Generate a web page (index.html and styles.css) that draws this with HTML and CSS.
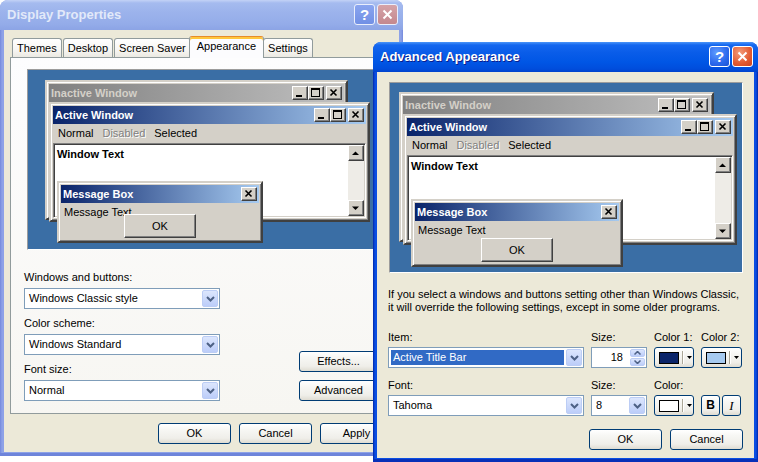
FILE: index.html
```html
<!DOCTYPE html>
<html lang="en">
<head>
<meta charset="utf-8">
<title>Display Properties</title>
<link rel="stylesheet" href="styles.css">
</head>
<body>
<div class="desktop">

  <div class="xpwin dp">
    <div class="xptitle">
      <span class="xptitle-text">Display Properties</span>
      <span class="xpbtn help">?</span>
      <span class="xpbtn close"><svg width="11" height="11" viewBox="0 0 11 11"><path d="M1.5 1.5l8 8M9.5 1.5l-8 8" stroke="#fff" stroke-width="2"/></svg></span>
    </div>
    <div class="xpbody dp-body">
      <div class="tabs">
        <div class="tab">Themes</div>
        <div class="tab">Desktop</div>
        <div class="tab">Screen Saver</div>
        <div class="tab sel">Appearance</div>
        <div class="tab">Settings</div>
      </div>
      <div class="tabpanel">
        <div class="preview dp-preview">
          <div class="cwin inact">
            <div class="ctitle"><span class="t">Inactive Window</span>
              <span class="cb"><svg width="14" height="12" viewBox="0 0 14 12"><rect x="3" y="8" width="6" height="2"/></svg></span>
              <span class="cb"><svg width="14" height="12" viewBox="0 0 14 12"><path fill-rule="evenodd" d="M2 1h9v9H2z M3 3v6h7V3z"/></svg></span>
              <span class="cb gap"><svg width="14" height="12" viewBox="0 0 14 12"><path d="M3.5 2.5l6 6M9.5 2.5l-6 6" stroke="#000" stroke-width="1.6"/></svg></span>
            </div>
          </div>
          <div class="cwin act">
            <div class="ctitle"><span class="t">Active Window</span>
              <span class="cb"><svg width="14" height="12" viewBox="0 0 14 12"><rect x="3" y="8" width="6" height="2"/></svg></span>
              <span class="cb"><svg width="14" height="12" viewBox="0 0 14 12"><path fill-rule="evenodd" d="M2 1h9v9H2z M3 3v6h7V3z"/></svg></span>
              <span class="cb gap"><svg width="14" height="12" viewBox="0 0 14 12"><path d="M3.5 2.5l6 6M9.5 2.5l-6 6" stroke="#000" stroke-width="1.6"/></svg></span>
            </div>
            <div class="cmenu"><span>Normal</span><span class="dis">Disabled</span><span>Selected</span></div>
            <div class="ctext">
              <div class="wtext">Window Text</div>
              <div class="cscroll">
                <span class="cb sq"><svg width="14" height="14" viewBox="0 0 14 14"><path d="M3 9h7L6.5 5.5z"/></svg></span>
                <span class="track"></span>
                <span class="cb sq"><svg width="14" height="14" viewBox="0 0 14 14"><path d="M3 5.5h7L6.5 9z"/></svg></span>
              </div>
            </div>
          </div>
          <div class="cwin msg">
            <div class="ctitle"><span class="t">Message Box</span>
              <span class="cb"><svg width="14" height="12" viewBox="0 0 14 12"><path d="M3.5 2.5l6 6M9.5 2.5l-6 6" stroke="#000" stroke-width="1.6"/></svg></span>
            </div>
            <div class="mtext">Message Text</div>
            <div class="cpush">OK</div>
          </div>
        </div>

        <div class="dp-controls">
          <div class="fields">
            <div class="field">
              <div class="lbl">Windows and buttons:</div>
              <div class="combo"><span class="val">Windows Classic style</span><span class="drop"><svg width="9" height="6" viewBox="0 0 9 6"><path d="M1 1l3.5 3.5L8 1" stroke="#4d6185" stroke-width="2" fill="none"/></svg></span></div>
            </div>
            <div class="field">
              <div class="lbl">Color scheme:</div>
              <div class="combo"><span class="val">Windows Standard</span><span class="drop"><svg width="9" height="6" viewBox="0 0 9 6"><path d="M1 1l3.5 3.5L8 1" stroke="#4d6185" stroke-width="2" fill="none"/></svg></span></div>
            </div>
            <div class="field">
              <div class="lbl">Font size:</div>
              <div class="combo"><span class="val">Normal</span><span class="drop"><svg width="9" height="6" viewBox="0 0 9 6"><path d="M1 1l3.5 3.5L8 1" stroke="#4d6185" stroke-width="2" fill="none"/></svg></span></div>
            </div>
          </div>
          <div class="side-btns">
            <div class="xbtn wide">Effects...</div>
            <div class="xbtn wide">Advanced</div>
          </div>
        </div>
      </div>
      <div class="dlg-btns">
        <div class="xbtn">OK</div>
        <div class="xbtn">Cancel</div>
        <div class="xbtn">Apply</div>
      </div>
    </div>
  </div>

  <div class="xpwin aa">
    <div class="xptitle">
      <span class="xptitle-text">Advanced Appearance</span>
      <span class="xpbtn help">?</span>
      <span class="xpbtn close"><svg width="11" height="11" viewBox="0 0 11 11"><path d="M1.5 1.5l8 8M9.5 1.5l-8 8" stroke="#fff" stroke-width="2"/></svg></span>
    </div>
    <div class="xpbody aa-body">
      <div class="preview aa-preview">
        <div class="cwin inact">
          <div class="ctitle"><span class="t">Inactive Window</span>
            <span class="cb"><svg width="14" height="12" viewBox="0 0 14 12"><rect x="3" y="8" width="6" height="2"/></svg></span>
            <span class="cb"><svg width="14" height="12" viewBox="0 0 14 12"><path fill-rule="evenodd" d="M2 1h9v9H2z M3 3v6h7V3z"/></svg></span>
            <span class="cb gap"><svg width="14" height="12" viewBox="0 0 14 12"><path d="M3.5 2.5l6 6M9.5 2.5l-6 6" stroke="#000" stroke-width="1.6"/></svg></span>
          </div>
        </div>
        <div class="cwin act">
          <div class="ctitle"><span class="t">Active Window</span>
            <span class="cb"><svg width="14" height="12" viewBox="0 0 14 12"><rect x="3" y="8" width="6" height="2"/></svg></span>
            <span class="cb"><svg width="14" height="12" viewBox="0 0 14 12"><path fill-rule="evenodd" d="M2 1h9v9H2z M3 3v6h7V3z"/></svg></span>
            <span class="cb gap"><svg width="14" height="12" viewBox="0 0 14 12"><path d="M3.5 2.5l6 6M9.5 2.5l-6 6" stroke="#000" stroke-width="1.6"/></svg></span>
          </div>
          <div class="cmenu"><span>Normal</span><span class="dis">Disabled</span><span>Selected</span></div>
          <div class="ctext">
            <div class="wtext">Window Text</div>
            <div class="cscroll">
              <span class="cb sq"><svg width="14" height="14" viewBox="0 0 14 14"><path d="M3 9h7L6.5 5.5z"/></svg></span>
              <span class="track"></span>
              <span class="cb sq"><svg width="14" height="14" viewBox="0 0 14 14"><path d="M3 5.5h7L6.5 9z"/></svg></span>
            </div>
          </div>
        </div>
        <div class="cwin msg">
          <div class="ctitle"><span class="t">Message Box</span>
            <span class="cb"><svg width="14" height="12" viewBox="0 0 14 12"><path d="M3.5 2.5l6 6M9.5 2.5l-6 6" stroke="#000" stroke-width="1.6"/></svg></span>
          </div>
          <div class="mtext">Message Text</div>
          <div class="cpush">OK</div>
        </div>
      </div>

      <p class="note">If you select a windows and buttons setting other than Windows Classic,<br>it will override the following settings, except in some older programs.</p>

      <div class="aa-grid">
        <div class="lbl">Item:</div>
        <div class="lbl">Size:</div>
        <div class="lbl">Color 1:</div>
        <div class="lbl">Color 2:</div>

        <div class="combo"><span class="val hl">Active Title Bar</span><span class="drop"><svg width="9" height="6" viewBox="0 0 9 6"><path d="M1 1l3.5 3.5L8 1" stroke="#4d6185" stroke-width="2" fill="none"/></svg></span></div>
        <div class="spin"><span class="val">18</span><span class="arrows"><span><svg width="7" height="4" viewBox="0 0 7 4"><path d="M0.5 3.5l3-3 3 3" stroke="#4d6185" stroke-width="1.5" fill="none"/></svg></span><span><svg width="7" height="4" viewBox="0 0 7 4"><path d="M0.5 0.5l3 3 3-3" stroke="#4d6185" stroke-width="1.5" fill="none"/></svg></span></span></div>
        <div class="xbtn colorbtn"><span class="swatch navy"></span><span class="sep"></span><svg width="5" height="3" viewBox="0 0 5 3"><path d="M0 0h5L2.5 3z"/></svg></div>
        <div class="xbtn colorbtn"><span class="swatch light"></span><span class="sep"></span><svg width="5" height="3" viewBox="0 0 5 3"><path d="M0 0h5L2.5 3z"/></svg></div>

        <div class="lbl low">Font:</div>
        <div class="lbl low">Size:</div>
        <div class="lbl low">Color:</div>
        <div class="lbl low"></div>

        <div class="combo"><span class="val">Tahoma</span><span class="drop"><svg width="9" height="6" viewBox="0 0 9 6"><path d="M1 1l3.5 3.5L8 1" stroke="#4d6185" stroke-width="2" fill="none"/></svg></span></div>
        <div class="combo"><span class="val">8</span><span class="drop"><svg width="9" height="6" viewBox="0 0 9 6"><path d="M1 1l3.5 3.5L8 1" stroke="#4d6185" stroke-width="2" fill="none"/></svg></span></div>
        <div class="xbtn colorbtn"><span class="swatch white"></span><span class="sep"></span><svg width="5" height="3" viewBox="0 0 5 3"><path d="M0 0h5L2.5 3z"/></svg></div>
        <div class="bi"><div class="xbtn bold">B</div><div class="xbtn ital">I</div></div>
      </div>

      <div class="aa-btns">
        <div class="xbtn">OK</div>
        <div class="xbtn">Cancel</div>
      </div>
    </div>
  </div>

</div>
</body>
</html>
```

FILE: styles.css
```css
* { box-sizing: border-box; margin: 0; padding: 0; }

body {
  width: 758px;
  height: 462px;
  overflow: hidden;
  background: #fff;
  font-family: "Liberation Sans", Arial, sans-serif;
  font-size: 11px;
  line-height: 13px;
  color: #000;
}

.desktop { position: relative; width: 758px; height: 462px; }

/* ---------- XP window frame ---------- */
.xpwin {
  position: absolute;
  display: flex;
  flex-direction: column;
  border-radius: 8px 8px 0 0;
  overflow: hidden;
}
.dp {
  left: 0; top: 0; width: 403px; height: 456px;
  background: linear-gradient(to right, #7489dc, #8ea2e7 2px, #8ea2e7 calc(100% - 2px), #7489dc);
  box-shadow: inset 0 -3px #6e84da;
}
.aa {
  left: 373px; top: 42px; width: 385px; height: 420px;
  background: linear-gradient(to right, #0026a8, #0a4ee2 2px, #0a4ee2 calc(100% - 2px), #0026a8);
  box-shadow: inset 0 -3px #0830b8;
}

.xptitle {
  flex: none;
  height: 30px;
  display: flex;
  align-items: center;
  padding: 0 5px 1px 7px;
}
.xptitle-text {
  flex: 1;
  font-weight: bold;
  font-size: 13px;
  line-height: 16px;
  white-space: nowrap;
}
.dp .xptitle { background: linear-gradient(#c3d2f6, #a5bbef 3px, #9cb3ec 12px, #94ace9 24px, #8ca4e5); }
.dp .xptitle-text { color: #e2e9f9; }
.aa .xptitle { background: linear-gradient(#4b95f8, #1467ef 3px, #0a5de9 10px, #0056e5 20px, #004ddc 27px, #0042cc); }
.aa .xptitle-text { color: #fff; text-shadow: 1px 1px #0b1d8c; }

.xpbtn {
  flex: none;
  width: 21px;
  height: 21px;
  margin-left: 2px;
  border: 1px solid #fff;
  border-radius: 3px;
  display: flex;
  align-items: center;
  justify-content: center;
  color: #fff;
  font-weight: bold;
  font-size: 15px;
  line-height: 15px;
}
.aa .help { background: radial-gradient(circle at 35% 30%, #5f9cff, #2b68ec 60%, #1c52d4); }
.aa .close { background: radial-gradient(circle at 35% 30%, #f39b79, #e25a31 60%, #c94321); }
.dp .xpbtn { border-color: #e9eefc; }
.dp .help { background: linear-gradient(#8aa5ef, #7190e5); }
.dp .close { background: linear-gradient(#d5a3a8, #c4888e); }

.xpbody {
  flex: 1;
  min-height: 0;
  background: #ece9d8;
  margin: 0 4px 4px;
  display: flex;
  flex-direction: column;
}
.dp-body { padding-top: 6px; }
.aa-body { padding: 10px 11px 0 12px; }

/* ---------- tabs ---------- */
.tabs {
  display: flex;
  align-items: flex-end;
  height: 21px;
  margin-left: 8px;
  position: relative;
  z-index: 1;
}
.tab {
  height: 19px;
  padding: 1px 4px 0;
  border: 1px solid #919b9c;
  border-bottom: none;
  border-radius: 3px 3px 0 0;
  background: linear-gradient(#fff, #f7f6f3 60%, #ebe9e2);
  display: flex;
  align-items: center;
  white-space: nowrap;
}
.tab + .tab { margin-left: 1px; }
.tab.sel {
  height: 22px;
  margin: 0 -2px -1px;
  padding: 0 7px 2px;
  background: #fcfcfe;
  border-top: 1px solid #e68b2c;
  box-shadow: inset 0 2px #ffc73c;
  position: relative;
}

.tabpanel {
  margin: 0 6px;
  border: 1px solid #919b9c;
  background: linear-gradient(#fdfdfe, #f7f6f2);
  padding: 11px 14px 12px 13px;
}

/* ---------- classic preview ---------- */
.preview {
  position: relative;
  background: #3a6ea5;
  border: 1px solid;
  border-color: #9c9c9c #fff #fff #9c9c9c;
  overflow: hidden;
}
.dp-preview { width: 349px; height: 181px; margin-left: 3px; }
.aa-preview { width: 354px; height: 191px; flex: none; }

.cwin {
  position: absolute;
  background: #d4d0c8;
  border: 2px solid;
  border-color: #d4d0c8 #404040 #404040 #d4d0c8;
  box-shadow: inset 1px 1px #fff, inset -1px -1px #808080;
  padding: 2px;
  display: flex;
  flex-direction: column;
}
.dp-preview .inact { left: 17px; top: 10px; width: 303px; height: 140px; }
.dp-preview .act { left: 21px; top: 32px; width: 321px; height: 120px; }
.dp-preview .msg { left: 29px; top: 111px; width: 206px; height: 62px; }
.dp-preview .msg .cpush { margin-top: -5px; }
.aa-preview .inact { left: 9px; top: 9px; width: 315px; height: 150px; }
.aa-preview .act { left: 13px; top: 31px; width: 334px; height: 131px; }
.aa-preview .msg { left: 21px; top: 116px; width: 212px; height: 68px; }
.aa-preview .msg .cpush { margin-top: 1px; }

.ctitle {
  flex: none;
  height: 18px;
  display: flex;
  align-items: center;
  padding: 0 2px 0 2px;
  font-weight: bold;
  color: #fff;
  white-space: nowrap;
  background: linear-gradient(to right, #0a246a, #a6caf0);
}
.inact .ctitle { background: linear-gradient(to right, #808080, #c0c0c0); color: #d4d0c8; }
.ctitle .t { flex: 1; }

.cb {
  flex: none;
  width: 16px;
  height: 14px;
  background: #d4d0c8;
  border: 1px solid;
  border-color: #fff #404040 #404040 #fff;
  box-shadow: inset -1px -1px #808080;
  display: flex;
}
.cb.gap { margin-left: 2px; }
.cb.sq { height: 16px; }

.cmenu {
  flex: none;
  height: 19px;
  display: flex;
  align-items: center;
  gap: 9px;
  padding-left: 5px;
}
.dis { color: #808080; text-shadow: 1px 1px #fff; }

.ctext {
  flex: 1;
  display: flex;
  background: #fff;
  border: 1px solid;
  border-color: #808080 #fff #fff #808080;
  box-shadow: inset 1px 1px #404040, inset -1px -1px #d4d0c8;
  padding: 1px;
}
.wtext { flex: 1; font-weight: bold; padding: 3px 2px; }
.cscroll { flex: none; width: 16px; display: flex; flex-direction: column; }
.track { flex: 1; background: #eeece7; }

.mtext { padding: 3px 3px 0; white-space: nowrap; }
.cpush {
  align-self: center;
  width: 72px;
  height: 24px;
  background: #d4d0c8;
  border: 1px solid;
  border-color: #fff #404040 #404040 #fff;
  box-shadow: inset -1px -1px #808080;
  display: flex;
  align-items: center;
  justify-content: center;
}

/* ---------- XP controls ---------- */
.dp-controls { display: flex; align-items: flex-end; margin-top: 21px; }
.fields { width: 196px; flex: none; }
.field + .field { margin-top: 8px; }
.lbl { height: 13px; margin-bottom: 4px; white-space: nowrap; }
.side-btns { flex: none; display: flex; flex-direction: column; gap: 8px; margin-left: 79px; }

.xbtn {
  flex: none;
  width: 73px;
  height: 21px;
  border: 1px solid #003c74;
  border-radius: 3px;
  background: linear-gradient(#fff, #f7f7f4 30%, #efeee9 75%, #dfdcd2);
  display: flex;
  align-items: center;
  justify-content: center;
  white-space: nowrap;
}
.xbtn.wide { width: 79px; }

.dlg-btns { display: flex; justify-content: flex-end; gap: 8px; margin: 9px 6px 0 0; }

.combo {
  height: 21px;
  border: 1px solid #7f9db9;
  background: #fff;
  display: flex;
  align-items: center;
  padding: 1px;
}
.combo .val { flex: 1; padding-left: 3px; white-space: nowrap; overflow: hidden; }
.combo .val.hl {
  background: #316ac5;
  color: #fff;
  height: 15px;
  line-height: 15px;
  margin: 0 2px 0 1px;
  padding-left: 2px;
}
.drop {
  flex: none;
  width: 16px;
  height: 17px;
  border: 1px solid #bccdf5;
  border-radius: 2px;
  background: linear-gradient(#dce6fd, #bccdf9);
  display: flex;
  align-items: center;
  justify-content: center;
}

/* ---------- Advanced Appearance ---------- */
.note { margin: 15px 0 0 -1px; white-space: nowrap; }

.aa-grid {
  display: grid;
  grid-template-columns: 196px 56px 40px 41px;
  grid-template-rows: 16px 21px 27px 21px;
  column-gap: 7px;
  margin: 17px 0 0 -1px;
}
.aa-grid .lbl { margin: 0; }
.aa-grid .lbl.low { align-self: end; height: 16px; }

.spin {
  height: 21px;
  border: 1px solid #7f9db9;
  background: #fff;
  display: flex;
  padding: 1px;
}
.spin .val { flex: 1; text-align: right; padding-right: 7px; line-height: 17px; }
.arrows { flex: none; width: 15px; display: flex; flex-direction: column; gap: 1px; }
.arrows span {
  flex: 1;
  border: 1px solid #bccdf5;
  border-radius: 2px;
  background: linear-gradient(#dce6fd, #bccdf9);
  display: flex;
  align-items: center;
  justify-content: center;
}

.xbtn.colorbtn { width: auto; justify-content: flex-start; padding-left: 4px; }
.swatch { width: 20px; height: 12px; border: 1px solid #000; }
.swatch.navy { background: #0a246a; }
.swatch.light { background: #a6caf0; }
.swatch.white { background: #fff; }
.sep { width: 2px; height: 13px; border-left: 1px solid #aca899; border-right: 1px solid #fff; margin: 0 3px 0 3px; }

.bi { display: flex; gap: 2px; }
.bi .xbtn { width: 19px; }
.xbtn.bold { font-weight: bold; font-size: 12px; }
.xbtn.ital { font-family: "Liberation Serif", serif; font-style: italic; font-size: 13px; }

.aa-btns { display: flex; justify-content: flex-end; gap: 8px; margin-top: 13px; }
```
